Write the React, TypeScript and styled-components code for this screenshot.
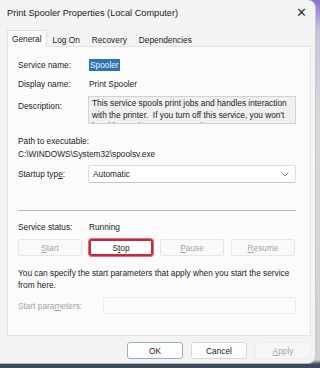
import React from "react";
import styled, { createGlobalStyle } from "styled-components";

const GlobalStyle = createGlobalStyle`
  html, body {
    margin: 0;
    padding: 0;
    width: 320px;
    height: 368px;
    overflow: hidden;
    background: #3d4b5c;
  }
  body {
    font-family: "Liberation Sans", Arial, sans-serif;
    font-size: 8.3px;
    color: #1b1b1b;
  }
`;

const Desktop = styled.div`
  width: 320px;
  height: 368px;
  background: linear-gradient(180deg, #8a6fcf 0px, #c9c3dc 30px, #d8d8dc 120px, #cfd0d4 360px, #3d4b5c 364px);
  display: flex;
  align-items: flex-start;
`;

const Window = styled.div`
  width: 316px;
  height: 364px;
  box-sizing: border-box;
  background: #f3f3f3;
  border-right: 1px solid #c9c9c9;
  border-bottom: 1px solid #b8b8b8;
  border-radius: 0 8px 8px 0;
  display: flex;
  flex-direction: column;
`;

const TitleBar = styled.div`
  height: 26px;
  display: flex;
  align-items: center;
  justify-content: space-between;
  padding: 0 8px 0 7px;
`;

const Title = styled.span`
  font-size: 9.2px;
  color: #1a1a1a;
`;

const Close = styled.span`
  font-size: 13px;
  color: #333;
  font-weight: 300;
  margin-top: -2px;
`;

const Tabs = styled.div`
  display: flex;
  align-items: flex-end;
  height: 20px;
  padding-left: 7px;
`;

const Tab = styled.div<{ active?: boolean }>`
  height: ${(p) => (p.active ? "16px" : "14px")};
  padding: 0 ${(p) => (p.active ? "4px" : "5px")};
  display: flex;
  align-items: center;
  background: ${(p) => (p.active ? "#fbfbfb" : "transparent")};
  border: 1px solid ${(p) => (p.active ? "#e0e0e0" : "transparent")};
  border-bottom: none;
  margin-bottom: -1px;
  position: relative;
  z-index: 1;
`;

const Panel = styled.div`
  width: 304px;
  height: 290px;
  margin-left: 7px;
  box-sizing: border-box;
  background: #fbfbfb;
  border: 1px solid #e3e3e3;
  padding: 10px 14px 0 10px;
  display: flex;
  flex-direction: column;
`;

const Row = styled.div<{ h: number }>`
  display: flex;
  align-items: center;
  height: ${(p) => p.h}px;
`;

const Label = styled.div<{ w?: number; muted?: boolean; top?: number }>`
  width: ${(p) => p.w ?? 70}px;
  flex-shrink: 0;
  color: ${(p) => (p.muted ? "#a3a3a3" : "#1b1b1b")};
  ${(p) => (p.top !== undefined ? `align-self: flex-start; padding-top: ${p.top}px;` : "")}
`;

const Selected = styled.span`
  background: #2e73b8;
  color: #eef4fb;
  padding: 1px 1px;
  margin-left: 1px;
`;

const Value = styled.span`
  margin-left: 1px;
`;

const DescBox = styled.div`
  width: 210px;
  height: 28px;
  box-sizing: border-box;
  background: #f0f0f0;
  border: 1px solid #d2d2d2;
  padding: 1px 2px 0 3px;
  line-height: 11.5px;
  overflow: hidden;
  align-self: flex-start;
`;

const Block = styled.div`
  display: flex;
  flex-direction: column;
  line-height: 13px;
`;

const Combo = styled.div`
  width: 210px;
  height: 18px;
  box-sizing: border-box;
  background: #ffffff;
  border: 1px solid #dcdcdc;
  border-bottom-color: #c4c4c4;
  border-radius: 2px;
  display: flex;
  align-items: center;
  justify-content: space-between;
  padding: 0 6px 0 4px;
`;

const Separator = styled.div`
  height: 1px;
  background: #b8b8b8;
  width: 278px;
`;

const ButtonRow = styled.div`
  display: flex;
  gap: 7px;
  height: 18px;
`;

const Button = styled.div<{ disabled?: boolean; highlight?: boolean }>`
  width: 64px;
  height: 17px;
  box-sizing: border-box;
  display: flex;
  align-items: center;
  justify-content: center;
  background: ${(p) => (p.disabled ? "#f9f9f9" : "#ffffff")};
  border: ${(p) => (p.highlight ? "2px solid #c52a3a" : "1px solid #e6e6e6")};
  outline: ${(p) => (p.highlight ? "1px solid #d9707a" : "none")};
  color: ${(p) => (p.disabled ? "#a6a6a6" : "#1b1b1b")};
  border-radius: 2px;
`;

const HelpText = styled.div`
  line-height: 11.5px;
`;

const ParamInput = styled.div`
  width: 195px;
  height: 17px;
  box-sizing: border-box;
  background: #fbfbfb;
  border: 1px solid #ececec;
  border-radius: 2px;
`;

const Footer = styled.div`
  display: flex;
  justify-content: flex-end;
  gap: 8px;
  padding: 6px 4px 0 0;
`;

const FooterButton = styled.div<{ primary?: boolean; disabled?: boolean }>`
  width: 56px;
  height: 17px;
  box-sizing: border-box;
  display: flex;
  align-items: center;
  justify-content: center;
  background: ${(p) => (p.disabled ? "#f6f6f6" : "#fdfdfd")};
  border: 1px solid ${(p) => (p.primary ? "#8fb3c6" : p.disabled ? "#ececec" : "#d8d8d8")};
  border-radius: 3px;
  color: ${(p) => (p.disabled ? "#a6a6a6" : "#1b1b1b")};
`;

const Spacer = styled.div<{ h: number }>`
  height: ${(p) => p.h}px;
  flex-shrink: 0;
`;

const Chevron = () => (
  <svg width="8" height="5" viewBox="0 0 8 5">
    <path d="M0.5 0.5 L4 4 L7.5 0.5" fill="none" stroke="#7a7a7a" strokeWidth="0.9" />
  </svg>
);

const App: React.FC = () => {
  return (
    <>
      <GlobalStyle />
      <Desktop>
        <Window>
          <TitleBar>
            <Title>Print Spooler Properties (Local Computer)</Title>
            <Close>✕</Close>
          </TitleBar>
          <Tabs>
            <Tab active>General</Tab>
            <Tab>Log On</Tab>
            <Tab>Recovery</Tab>
            <Tab>Dependencies</Tab>
          </Tabs>
          <Panel>
            <Row h={16}>
              <Label>Service name:</Label>
              <Selected>Spooler</Selected>
            </Row>
            <Spacer h={3} />
            <Row h={16}>
              <Label>Display name:</Label>
              <Value>Print Spooler</Value>
            </Row>
            <Spacer h={4} />
            <Row h={28}>
              <Label top={5}>Description:</Label>
              <DescBox>
                This service spools print jobs and handles interaction
                <br />
                with the printer.&nbsp; If you turn off this service, you won't
                <br />
                be able to print or see your printers.
              </DescBox>
            </Row>
            <Spacer h={11} />
            <Block>
              <span>Path to executable:</span>
              <span>C:\WINDOWS\System32\spoolsv.exe</span>
            </Block>
            <Spacer h={4} />
            <Row h={18}>
              <Label>
                Startup typ<u>e</u>:
              </Label>
              <Combo>
                <span>Automatic</span>
                <Chevron />
              </Combo>
            </Row>
            <Spacer h={27} />
            <Separator />
            <Spacer h={8} />
            <Row h={15}>
              <Label>Service status:</Label>
              <Value>Running</Value>
            </Row>
            <Spacer h={5} />
            <ButtonRow>
              <Button disabled>
                <u>S</u>tart
              </Button>
              <Button highlight>
                S<u>t</u>op
              </Button>
              <Button disabled>
                <u>P</u>ause
              </Button>
              <Button disabled>
                <u>R</u>esume
              </Button>
            </ButtonRow>
            <Spacer h={11} />
            <HelpText>
              You can specify the start parameters that apply when you start the service
              <br />
              from here.
            </HelpText>
            <Spacer h={6} />
            <Row h={17}>
              <Label w={85} muted>
                Start para<u>m</u>eters:
              </Label>
              <ParamInput />
            </Row>
          </Panel>
          <Footer>
            <FooterButton primary>OK</FooterButton>
            <FooterButton>Cancel</FooterButton>
            <FooterButton disabled>
              <u>A</u>pply
            </FooterButton>
          </Footer>
        </Window>
      </Desktop>
    </>
  );
};

export default App;
